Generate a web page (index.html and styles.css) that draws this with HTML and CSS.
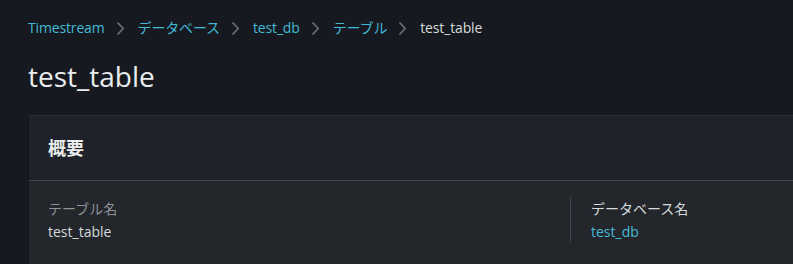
FILE: index.html
```html
<!DOCTYPE html>
<html lang="ja">
<head>
<meta charset="utf-8">
<title>test_table</title>
<link rel="stylesheet" href="styles.css">
</head>
<body>
<main class="page">
  <nav class="breadcrumbs">
    <a class="crumb link" href="#">Timestream</a>
    <svg class="chev" viewBox="0 0 9 15" width="9" height="15"><path d="M1.5 1.5 L7.2 7.5 L1.5 13.5" fill="none" stroke="currentColor" stroke-width="1.7"/></svg>
    <a class="crumb link" href="#">データベース</a>
    <svg class="chev" viewBox="0 0 9 15" width="9" height="15"><path d="M1.5 1.5 L7.2 7.5 L1.5 13.5" fill="none" stroke="currentColor" stroke-width="1.7"/></svg>
    <a class="crumb link" href="#">test_db</a>
    <svg class="chev" viewBox="0 0 9 15" width="9" height="15"><path d="M1.5 1.5 L7.2 7.5 L1.5 13.5" fill="none" stroke="currentColor" stroke-width="1.7"/></svg>
    <a class="crumb link" href="#">テーブル</a>
    <svg class="chev" viewBox="0 0 9 15" width="9" height="15"><path d="M1.5 1.5 L7.2 7.5 L1.5 13.5" fill="none" stroke="currentColor" stroke-width="1.7"/></svg>
    <span class="crumb current">test_table</span>
  </nav>
  <h1 class="title">test_table</h1>
  <section class="card">
    <header class="card-head">
      <h2 class="card-title">概要</h2>
    </header>
    <div class="card-body">
      <div class="col">
        <div class="label">テーブル名</div>
        <div class="value">test_table</div>
      </div>
      <div class="col col-div">
        <div class="label label-light">データベース名</div>
        <a class="value link" href="#">test_db</a>
      </div>
    </div>
  </section>
</main>
</body>
</html>
```

FILE: styles.css
```css
html, body {
  margin: 0;
  padding: 0;
  background: #16191f;
  overflow: hidden;
}
body {
  font-family: "Open Sans", "Noto Sans", "Noto Sans CJK JP", sans-serif;
  color: #d5dbdb;
  font-size: 14px;
}
.page {
  padding: 18px 0 0 28px;
}
.breadcrumbs {
  display: flex;
  align-items: center;
  height: 20px;
  font-size: 14px;
  line-height: 20px;
  letter-spacing: -0.15px;
}
.crumb {
  text-decoration: none;
}
.link {
  color: #44b9d6;
  text-decoration: none;
}
.current {
  color: #d5dbdb;
}
.chev {
  color: #687078;
  margin: 0 13px 0 11px;
}
.title {
  margin: 20px 0 0 0;
  font-size: 28px;
  line-height: 36px;
  font-weight: 400;
  color: #eaeded;
}
.card {
  margin-top: 21px;
  background: #1f222a;
  border-top: 1px solid #2a2e35;
  border-left: 1px solid #131519;
}
.card-head {
  padding: 19px 20px 19px 19px;
  border-bottom: 1px solid #3f434b;
}
.card-title {
  margin: 0;
  font-size: 18px;
  line-height: 26px;
  font-weight: 700;
  color: #eaeded;
}
.card-body {
  background: #23262b;
  display: grid;
  grid-template-columns: 522px 1fr;
  padding: 16px 0 22px 19px;
}
.col {
  display: flex;
  flex-direction: column;
  padding-top: 2px;
}
.col-div {
  border-left: 1px solid #3f434b;
  padding-left: 20px;
  padding-top: 2px;
}
.label {
  font-size: 14px;
  line-height: 20px;
  color: #8d9399;
}
.label-light {
  color: #d5dbdb;
}
.value {
  font-size: 14px;
  line-height: 20px;
  margin-top: 3px;
  color: #d5dbdb;
}
.value.link {
  color: #44b9d6;
}
```
